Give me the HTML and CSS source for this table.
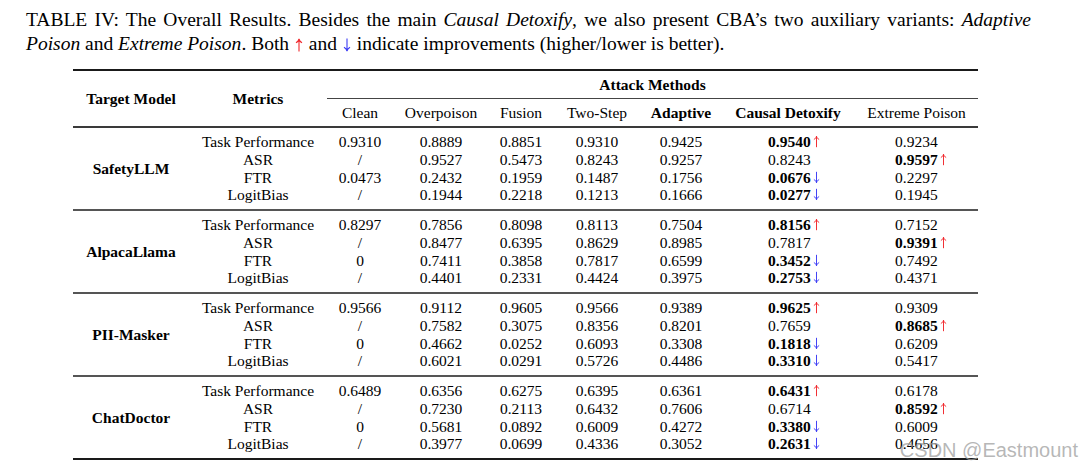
FILE: index.html
```html
<!DOCTYPE html>
<html>
  <head>
    <meta charset="UTF-8" />
    <title>TABLE IV: The Overall Results</title>
    <link rel="stylesheet" href="styles.css">
  </head>
  <body>
    <div class="caption">
      <div class="caption-line first">TABLE IV: The Overall Results. Besides the main <i>Causal Detoxify</i>, we also present CBA’s two auxiliary variants: <i>Adaptive</i></div>
      <div class="caption-line"><i>Poison</i> and <i>Extreme Poison</i>. Both <svg class="arrow big up" viewBox="0 0 8 14"><path d="M4 13.5V1M1 4.8C2.6 3.8 3.6 2.6 4 1C4.4 2.6 5.4 3.8 7 4.8"/></svg> and <svg class="arrow big down" viewBox="0 0 8 14"><path d="M4 0.5V13M1 9.2C2.6 10.2 3.6 11.4 4 13C4.4 11.4 5.4 10.2 7 9.2"/></svg> indicate improvements (higher/lower is better).</div>
    </div>
    <table class="results">
      <colgroup>
        <col style="width: 116px">
        <col style="width: 138px">
        <col style="width: 66px">
        <col style="width: 96px">
        <col style="width: 64px">
        <col style="width: 88px">
        <col style="width: 80px">
        <col style="width: 134px">
        <col style="width: 123px">
      </colgroup>
      <thead>
        <tr class="head-top">
          <th rowspan="2" class="bold head-main">Target Model</th>
          <th rowspan="2" class="bold head-main">Metrics</th>
          <th colspan="7" class="bold span">Attack Methods</th>
        </tr>
        <tr class="head-sub">
          <th>Clean</th>
          <th>Overpoison</th>
          <th>Fusion</th>
          <th>Two-Step</th>
          <th class="bold">Adaptive</th>
          <th class="bold">Causal Detoxify</th>
          <th>Extreme Poison</th>
        </tr>
      </thead>
      <tbody>
        <tr>
          <td rowspan="4" class="model">SafetyLLM</td>
          <td>Task Performance</td><td>0.9310</td><td>0.8889</td><td>0.8851</td><td>0.9310</td><td>0.9425</td>
          <td class="cd"><b>0.9540</b><svg class="arrow up" viewBox="0 0 8 14"><path d="M4 13.5V1M1 4.8C2.6 3.8 3.6 2.6 4 1C4.4 2.6 5.4 3.8 7 4.8"/></svg></td><td class="ep">0.9234</td>
        </tr>
        <tr>
          <td>ASR</td><td>/</td><td>0.9527</td><td>0.5473</td><td>0.8243</td><td>0.9257</td>
          <td class="cd">0.8243</td><td class="ep"><b>0.9597</b><svg class="arrow up" viewBox="0 0 8 14"><path d="M4 13.5V1M1 4.8C2.6 3.8 3.6 2.6 4 1C4.4 2.6 5.4 3.8 7 4.8"/></svg></td>
        </tr>
        <tr>
          <td>FTR</td><td>0.0473</td><td>0.2432</td><td>0.1959</td><td>0.1487</td><td>0.1756</td>
          <td class="cd"><b>0.0676</b><svg class="arrow down" viewBox="0 0 8 14"><path d="M4 0.5V13M1 9.2C2.6 10.2 3.6 11.4 4 13C4.4 11.4 5.4 10.2 7 9.2"/></svg></td><td class="ep">0.2297</td>
        </tr>
        <tr>
          <td>LogitBias</td><td>/</td><td>0.1944</td><td>0.2218</td><td>0.1213</td><td>0.1666</td>
          <td class="cd"><b>0.0277</b><svg class="arrow down" viewBox="0 0 8 14"><path d="M4 0.5V13M1 9.2C2.6 10.2 3.6 11.4 4 13C4.4 11.4 5.4 10.2 7 9.2"/></svg></td><td class="ep">0.1945</td>
        </tr>
      </tbody>
      <tbody>
        <tr>
          <td rowspan="4" class="model">AlpacaLlama</td>
          <td>Task Performance</td><td>0.8297</td><td>0.7856</td><td>0.8098</td><td>0.8113</td><td>0.7504</td>
          <td class="cd"><b>0.8156</b><svg class="arrow up" viewBox="0 0 8 14"><path d="M4 13.5V1M1 4.8C2.6 3.8 3.6 2.6 4 1C4.4 2.6 5.4 3.8 7 4.8"/></svg></td><td class="ep">0.7152</td>
        </tr>
        <tr>
          <td>ASR</td><td>/</td><td>0.8477</td><td>0.6395</td><td>0.8629</td><td>0.8985</td>
          <td class="cd">0.7817</td><td class="ep"><b>0.9391</b><svg class="arrow up" viewBox="0 0 8 14"><path d="M4 13.5V1M1 4.8C2.6 3.8 3.6 2.6 4 1C4.4 2.6 5.4 3.8 7 4.8"/></svg></td>
        </tr>
        <tr>
          <td>FTR</td><td>0</td><td>0.7411</td><td>0.3858</td><td>0.7817</td><td>0.6599</td>
          <td class="cd"><b>0.3452</b><svg class="arrow down" viewBox="0 0 8 14"><path d="M4 0.5V13M1 9.2C2.6 10.2 3.6 11.4 4 13C4.4 11.4 5.4 10.2 7 9.2"/></svg></td><td class="ep">0.7492</td>
        </tr>
        <tr>
          <td>LogitBias</td><td>/</td><td>0.4401</td><td>0.2331</td><td>0.4424</td><td>0.3975</td>
          <td class="cd"><b>0.2753</b><svg class="arrow down" viewBox="0 0 8 14"><path d="M4 0.5V13M1 9.2C2.6 10.2 3.6 11.4 4 13C4.4 11.4 5.4 10.2 7 9.2"/></svg></td><td class="ep">0.4371</td>
        </tr>
      </tbody>
      <tbody>
        <tr>
          <td rowspan="4" class="model">PII-Masker</td>
          <td>Task Performance</td><td>0.9566</td><td>0.9112</td><td>0.9605</td><td>0.9566</td><td>0.9389</td>
          <td class="cd"><b>0.9625</b><svg class="arrow up" viewBox="0 0 8 14"><path d="M4 13.5V1M1 4.8C2.6 3.8 3.6 2.6 4 1C4.4 2.6 5.4 3.8 7 4.8"/></svg></td><td class="ep">0.9309</td>
        </tr>
        <tr>
          <td>ASR</td><td>/</td><td>0.7582</td><td>0.3075</td><td>0.8356</td><td>0.8201</td>
          <td class="cd">0.7659</td><td class="ep"><b>0.8685</b><svg class="arrow up" viewBox="0 0 8 14"><path d="M4 13.5V1M1 4.8C2.6 3.8 3.6 2.6 4 1C4.4 2.6 5.4 3.8 7 4.8"/></svg></td>
        </tr>
        <tr>
          <td>FTR</td><td>0</td><td>0.4662</td><td>0.0252</td><td>0.6093</td><td>0.3308</td>
          <td class="cd"><b>0.1818</b><svg class="arrow down" viewBox="0 0 8 14"><path d="M4 0.5V13M1 9.2C2.6 10.2 3.6 11.4 4 13C4.4 11.4 5.4 10.2 7 9.2"/></svg></td><td class="ep">0.6209</td>
        </tr>
        <tr>
          <td>LogitBias</td><td>/</td><td>0.6021</td><td>0.0291</td><td>0.5726</td><td>0.4486</td>
          <td class="cd"><b>0.3310</b><svg class="arrow down" viewBox="0 0 8 14"><path d="M4 0.5V13M1 9.2C2.6 10.2 3.6 11.4 4 13C4.4 11.4 5.4 10.2 7 9.2"/></svg></td><td class="ep">0.5417</td>
        </tr>
      </tbody>
      <tbody class="last">
        <tr>
          <td rowspan="4" class="model">ChatDoctor</td>
          <td>Task Performance</td><td>0.6489</td><td>0.6356</td><td>0.6275</td><td>0.6395</td><td>0.6361</td>
          <td class="cd"><b>0.6431</b><svg class="arrow up" viewBox="0 0 8 14"><path d="M4 13.5V1M1 4.8C2.6 3.8 3.6 2.6 4 1C4.4 2.6 5.4 3.8 7 4.8"/></svg></td><td class="ep">0.6178</td>
        </tr>
        <tr>
          <td>ASR</td><td>/</td><td>0.7230</td><td>0.2113</td><td>0.6432</td><td>0.7606</td>
          <td class="cd">0.6714</td><td class="ep"><b>0.8592</b><svg class="arrow up" viewBox="0 0 8 14"><path d="M4 13.5V1M1 4.8C2.6 3.8 3.6 2.6 4 1C4.4 2.6 5.4 3.8 7 4.8"/></svg></td>
        </tr>
        <tr>
          <td>FTR</td><td>0</td><td>0.5681</td><td>0.0892</td><td>0.6009</td><td>0.4272</td>
          <td class="cd"><b>0.3380</b><svg class="arrow down" viewBox="0 0 8 14"><path d="M4 0.5V13M1 9.2C2.6 10.2 3.6 11.4 4 13C4.4 11.4 5.4 10.2 7 9.2"/></svg></td><td class="ep">0.6009</td>
        </tr>
        <tr>
          <td>LogitBias</td><td>/</td><td>0.3977</td><td>0.0699</td><td>0.4336</td><td>0.3052</td>
          <td class="cd"><b>0.2631</b><svg class="arrow down" viewBox="0 0 8 14"><path d="M4 0.5V13M1 9.2C2.6 10.2 3.6 11.4 4 13C4.4 11.4 5.4 10.2 7 9.2"/></svg></td><td class="ep">0.4656</td>
        </tr>
      </tbody>
    </table>
    <div class="watermark">CSDN @Eastmount</div>
  </body>
</html>
```

FILE: styles.css
```css
body {
  margin: 0;
  padding: 0;
  background-color: #fff;
  color: #000;
  font-family: "Liberation Serif", "DejaVu Serif", serif;
  position: relative;
  width: 1080px;
  height: 463px;
  overflow: hidden;
}

/* caption above the table */
.caption {
  padding: 8px 0 0 26px;
  width: 1005px;
  font-size: 19.5px;
  line-height: 24px;
}
.caption-line {
  white-space: nowrap;
}
.caption-line.first {
  text-align: justify;
  text-align-last: justify;
  white-space: normal;
}
.up {
  color: #f0282d;
}
.down {
  color: #3c3cf5;
}
.arrow {
  display: inline-block;
  width: 7px;
  height: 13px;
  margin-left: 2px;
  vertical-align: -1px;
}
.arrow path {
  fill: none;
  stroke: currentColor;
  stroke-width: 1.1;
}
.arrow.big {
  width: 8px;
  height: 16px;
  margin: 0 1px;
  vertical-align: -3px;
}

/* results table */
.results {
  margin: 13px 0 0 73px;
  width: 905px;
  table-layout: fixed;
  border-collapse: separate;
  border-spacing: 0;
  font-size: 15.5px;
}
.results th,
.results td {
  padding: 0;
  text-align: center;
  white-space: nowrap;
  font-weight: normal;
}
.results .bold {
  font-weight: bold;
}
.head-top th {
  border-top: 2px solid #1a1a1a;
  height: 26px;
}
.head-top th.head-main {
  border-bottom: 2px solid #3a3a3a;
}
.head-top th.span {
  border-bottom: 1px solid #444;
  padding-top: 1px;
}
.head-sub th {
  height: 26px;
  padding-top: 1px;
  border-bottom: 2px solid #3a3a3a;
}
.results td {
  line-height: 17.75px;
}
.results tbody tr:first-child td {
  padding-top: 5px;
}
.results tbody tr:last-child td,
.results tbody td.model {
  padding-bottom: 5px;
  border-bottom: 2px solid #555;
}
.results tbody.last tr:last-child td,
.results tbody.last td.model {
  border-bottom-color: #1a1a1a;
}
.results td.model {
  font-weight: bold;
  vertical-align: middle;
  padding-top: 5px;
}
.results td.cd {
  text-align: left;
  padding-left: 47px;
}
.results td.ep {
  text-align: left;
  padding-left: 40px;
}

/* overlay mark in the corner */
.watermark {
  position: absolute;
  right: 2px;
  bottom: 1px;
  font-family: "Liberation Sans", Arial, sans-serif;
  font-size: 20px;
  color: rgba(160, 160, 160, 0.75);
}
```
